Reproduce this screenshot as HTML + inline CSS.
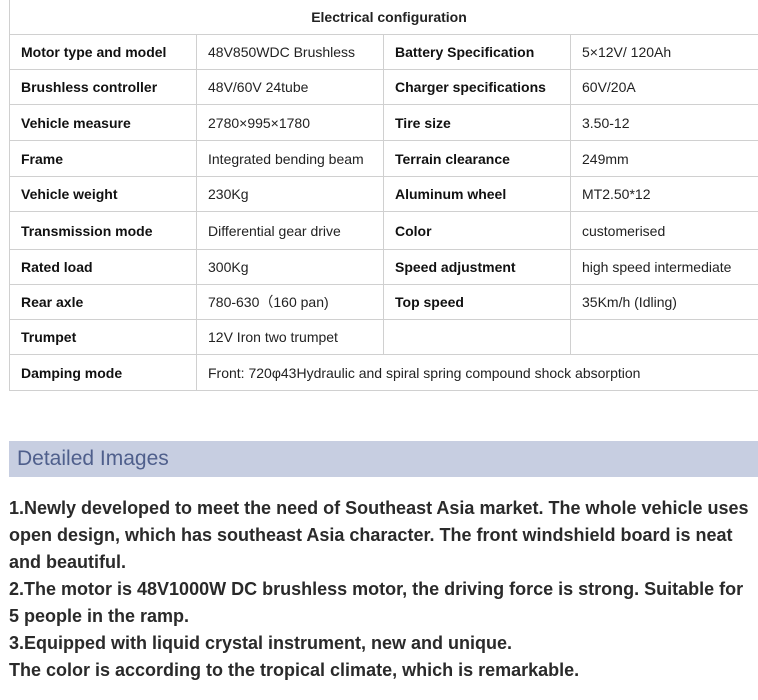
<!DOCTYPE html>
<html><head><meta charset="utf-8"><style>
body{margin:0;background:#fff;font-family:"Liberation Sans",Arial,sans-serif;width:758px;height:700px;overflow:hidden;position:relative}
table{position:absolute;left:9px;top:-1px;width:760px;border-collapse:collapse;table-layout:fixed;font-size:14px;color:#222}
td{border:1px solid #d0d0d0;padding:0 0 0 11px;vertical-align:middle;white-space:nowrap;overflow:hidden}
td.l{font-weight:bold;color:#111}
.band{position:absolute;left:9px;top:441px;width:749px;height:36px;background:#c7cee1}
.band span{position:absolute;left:8px;top:6px;font-size:21px;color:#4f5f8c}
.txt{position:absolute;left:9px;top:495px;font-size:18px;font-weight:bold;line-height:27px;color:#2a2a2a;white-space:nowrap}
</style></head><body>
<table>
<colgroup><col style="width:187px"><col style="width:187px"><col style="width:187px"><col></colgroup>
<tr style="height:35px"><td colspan="4" style="text-align:center;font-weight:bold;padding:0 0 0 0">Electrical configuration</td></tr>
<tr style="height:35px"><td class="l">Motor type and model</td><td>48V850WDC Brushless</td><td class="l">Battery Specification</td><td>5×12V/ 120Ah</td></tr>
<tr style="height:35px"><td class="l">Brushless controller</td><td>48V/60V 24tube</td><td class="l">Charger specifications</td><td>60V/20A</td></tr>
<tr style="height:36px"><td class="l">Vehicle measure</td><td>2780×995×1780</td><td class="l">Tire size</td><td>3.50-12</td></tr>
<tr style="height:36px"><td class="l">Frame</td><td>Integrated bending beam</td><td class="l">Terrain clearance</td><td>249mm</td></tr>
<tr style="height:35px"><td class="l">Vehicle weight</td><td>230Kg</td><td class="l">Aluminum wheel</td><td>MT2.50*12</td></tr>
<tr style="height:38px"><td class="l">Transmission mode</td><td>Differential gear drive</td><td class="l">Color</td><td>customerised</td></tr>
<tr style="height:35px"><td class="l">Rated load</td><td>300Kg</td><td class="l">Speed adjustment</td><td>high speed intermediate</td></tr>
<tr style="height:35px"><td class="l">Rear axle</td><td>780-630（160 pan)</td><td class="l">Top speed</td><td>35Km/h (Idling)</td></tr>
<tr style="height:35px"><td class="l">Trumpet</td><td>12V Iron two trumpet</td><td></td><td></td></tr>
<tr style="height:36px"><td class="l">Damping mode</td><td colspan="3">Front: 720φ43Hydraulic and spiral spring compound shock absorption</td></tr>
</table>
<div class="band"><span>Detailed Images</span></div>
<div class="txt">1.Newly developed to meet the need of Southeast Asia market. The whole vehicle uses<br>open design, which has southeast Asia character. The front windshield board is neat<br>and beautiful.<br>2.The motor is 48V1000W DC brushless motor, the driving force is strong. Suitable for<br>5 people in the ramp.<br>3.Equipped with liquid crystal instrument, new and unique.<br>The color is according to the tropical climate, which is remarkable.</div>
</body></html>
